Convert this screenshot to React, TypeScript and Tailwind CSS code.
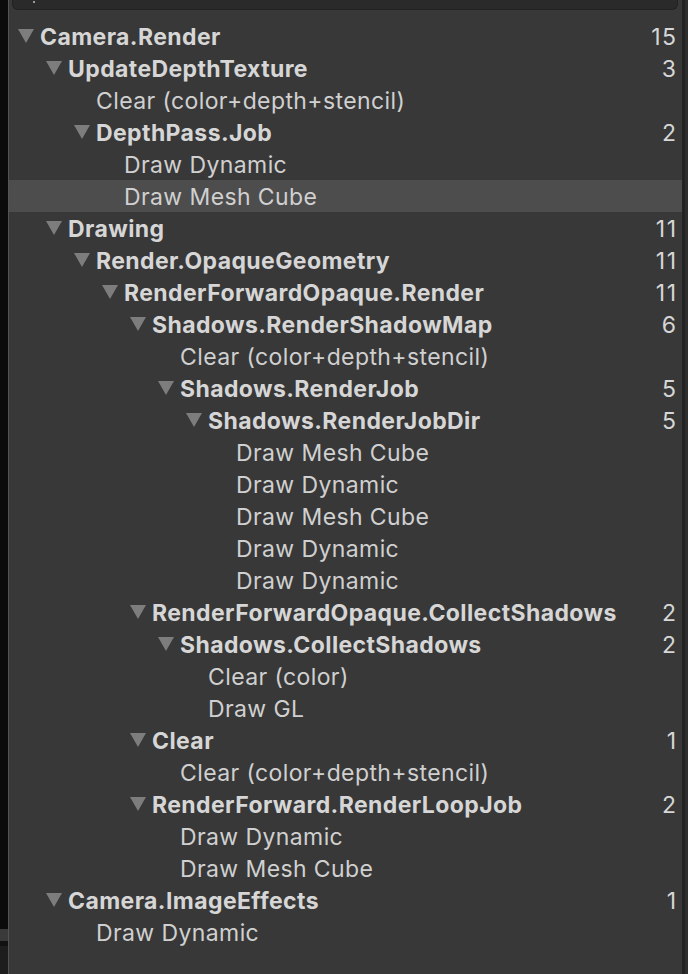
import React from "react";

interface Node {
  name: string;
  count?: number;
  children?: Node[];
}

const tree: Node[] = [
  {
    name: "Camera.Render",
    count: 15,
    children: [
      {
        name: "UpdateDepthTexture",
        count: 3,
        children: [
          { name: "Clear (color+depth+stencil)" },
          {
            name: "DepthPass.Job",
            count: 2,
            children: [{ name: "Draw Dynamic" }, { name: "Draw Mesh Cube" }],
          },
        ],
      },
      {
        name: "Drawing",
        count: 11,
        children: [
          {
            name: "Render.OpaqueGeometry",
            count: 11,
            children: [
              {
                name: "RenderForwardOpaque.Render",
                count: 11,
                children: [
                  {
                    name: "Shadows.RenderShadowMap",
                    count: 6,
                    children: [
                      { name: "Clear (color+depth+stencil)" },
                      {
                        name: "Shadows.RenderJob",
                        count: 5,
                        children: [
                          {
                            name: "Shadows.RenderJobDir",
                            count: 5,
                            children: [
                              { name: "Draw Mesh Cube" },
                              { name: "Draw Dynamic" },
                              { name: "Draw Mesh Cube" },
                              { name: "Draw Dynamic" },
                              { name: "Draw Dynamic" },
                            ],
                          },
                        ],
                      },
                    ],
                  },
                  {
                    name: "RenderForwardOpaque.CollectShadows",
                    count: 2,
                    children: [
                      {
                        name: "Shadows.CollectShadows",
                        count: 2,
                        children: [{ name: "Clear (color)" }, { name: "Draw GL" }],
                      },
                    ],
                  },
                  {
                    name: "Clear",
                    count: 1,
                    children: [{ name: "Clear (color+depth+stencil)" }],
                  },
                  {
                    name: "RenderForward.RenderLoopJob",
                    count: 2,
                    children: [{ name: "Draw Dynamic" }, { name: "Draw Mesh Cube" }],
                  },
                ],
              },
            ],
          },
        ],
      },
      {
        name: "Camera.ImageEffects",
        count: 1,
        children: [{ name: "Draw Dynamic" }],
      },
    ],
  },
];

interface Row {
  node: Node;
  depth: number;
}

function flatten(nodes: Node[], depth: number, out: Row[]) {
  nodes.forEach((n) => {
    out.push({ node: n, depth });
    if (n.children) flatten(n.children, depth + 1, out);
  });
  return out;
}

const rows = flatten(tree, 0, []);
const selected = 5;

function Triangle() {
  return (
    <svg width="16" height="14" viewBox="0 0 16 14" className="shrink-0">
      <path d="M0 0 H16 L8 14 Z" fill="#7d7d7d" />
    </svg>
  );
}

export default function App() {
  return (
    <div
      className="flex min-h-[974px] w-[688px] bg-[#383838]"
      style={{ fontFamily: "Inter, 'Noto Sans', sans-serif" }}
    >
      <div className="flex w-[8px] flex-col bg-[#0b0b0b]">
        <div className="h-[929px]" />
        <div className="h-[12px] bg-[#3a3a3a]" />
        <div className="h-[5px] bg-[#111111]" />
        <div className="flex-1 bg-[#1d1d1d]" />
      </div>
      <div className="w-px bg-[#545454]" />
      <div className="flex flex-1 flex-col">
        <div className="ml-[3px] mr-[4px] flex h-[10px] rounded-b-[6px] border border-t-0 border-[#222222] bg-[#2a2a2a] pl-[20px]">
          <div className="mt-px h-[2px] w-[2px] bg-[#9a9a9a]" />
        </div>
        <div className="h-[10px]" />
        {rows.map((r, i) => {
          const parent = !!r.node.children;
          return (
            <div
              key={i}
              className={`flex h-[32px] items-center pr-[6px] ${
                i === selected ? "bg-[#4d4d4d]" : ""
              }`}
            >
              <div
                className="flex items-center"
                style={{ paddingLeft: 9 + r.depth * 28 }}
              >
                <div className="flex w-[22px] items-center">
                  {parent && <Triangle />}
                </div>
                <span
                  className={`pt-[2px] text-[23px] leading-none ${
                    parent
                      ? "font-bold tracking-[0.4px] text-[#d6d6d6]"
                      : "font-normal tracking-[0.4px] text-[#d0d0d0]"
                  }`}
                >
                  {r.node.name}
                </span>
              </div>
              <div className="flex-1" />
              {r.node.count !== undefined && (
                <span className="mr-[-1.5px] pt-[2px] text-[23px] leading-none tracking-[1.5px] text-[#d6d6d6]">
                  {r.node.count}
                </span>
              )}
            </div>
          );
        })}
      </div>
      <div className="w-[3px] bg-[#232323]" />
      <div className="w-[3px] bg-[#2e2e2e]" />
    </div>
  );
}
